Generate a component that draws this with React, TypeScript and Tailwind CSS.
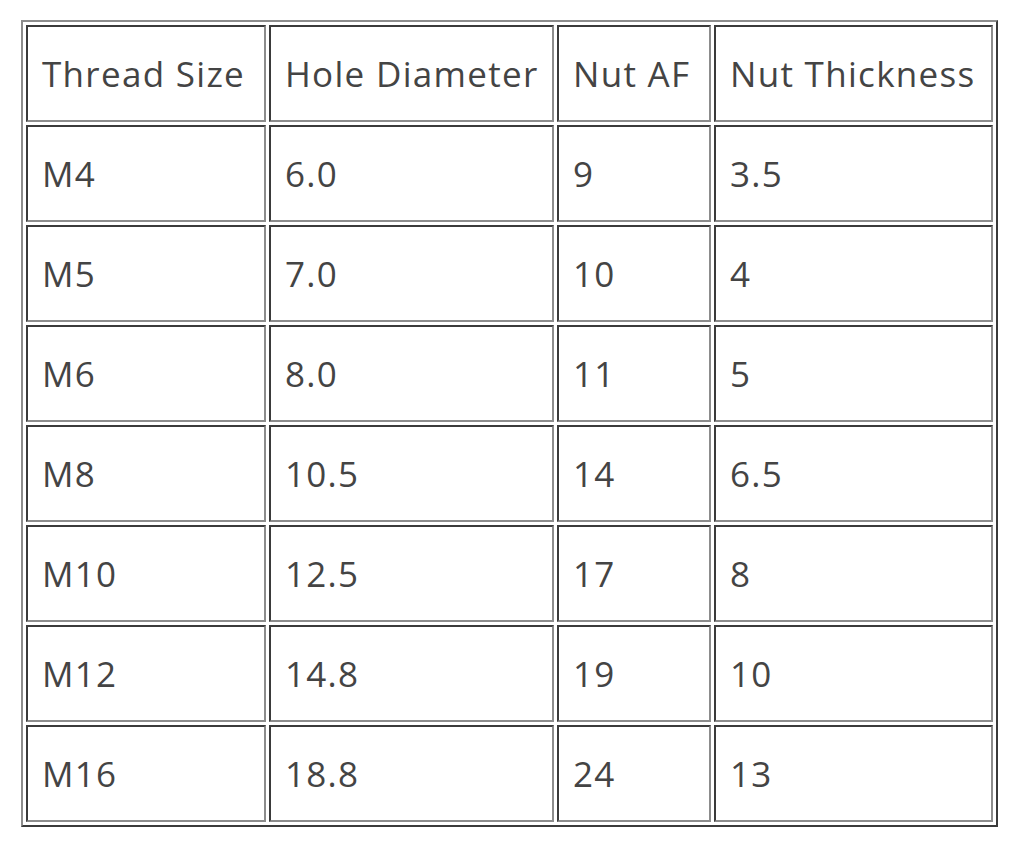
import React from 'react'

const rows = [
  ['M4', '6.0', '9', '3.5'],
  ['M5', '7.0', '10', '4'],
  ['M6', '8.0', '11', '5'],
  ['M8', '10.5', '14', '6.5'],
  ['M10', '12.5', '17', '8'],
  ['M12', '14.8', '19', '10'],
  ['M16', '18.8', '24', '13'],
]

const cell =
  'border-2 border-t-[#3a3a3a] border-l-[#3a3a3a] border-b-[#8c8c8c] border-r-[#8c8c8c] h-[97px] px-[14px] text-left font-normal align-middle leading-none whitespace-nowrap'

function App() {
  return (
    <div className="bg-white w-[1024px] h-[854px] pt-[20px] pl-[21px]" style={{ fontFamily: '"Open Sans", Lato, sans-serif' }}>
      <table className="table-fixed border-separate border-spacing-[3px] border-2 border-t-[#8c8c8c] border-l-[#8c8c8c] border-b-[#3a3a3a] border-r-[#3a3a3a] w-[977px] text-[35px] tracking-[1.3px] text-[#444444]">
        <thead>
          <tr>
            <th className={cell + ' w-[240px]'}>Thread Size</th>
            <th className={cell + ' w-[285px]'}>Hole Diameter</th>
            <th className={cell + ' w-[154px]'}>Nut AF</th>
            <th className={cell}>Nut Thickness</th>
          </tr>
        </thead>
        <tbody>
          {rows.map((r) => (
            <tr key={r[0]}>
              {r.map((v, i) => (
                <td key={i} className={cell}>
                  {v}
                </td>
              ))}
            </tr>
          ))}
        </tbody>
      </table>
    </div>
  )
}

export default App
